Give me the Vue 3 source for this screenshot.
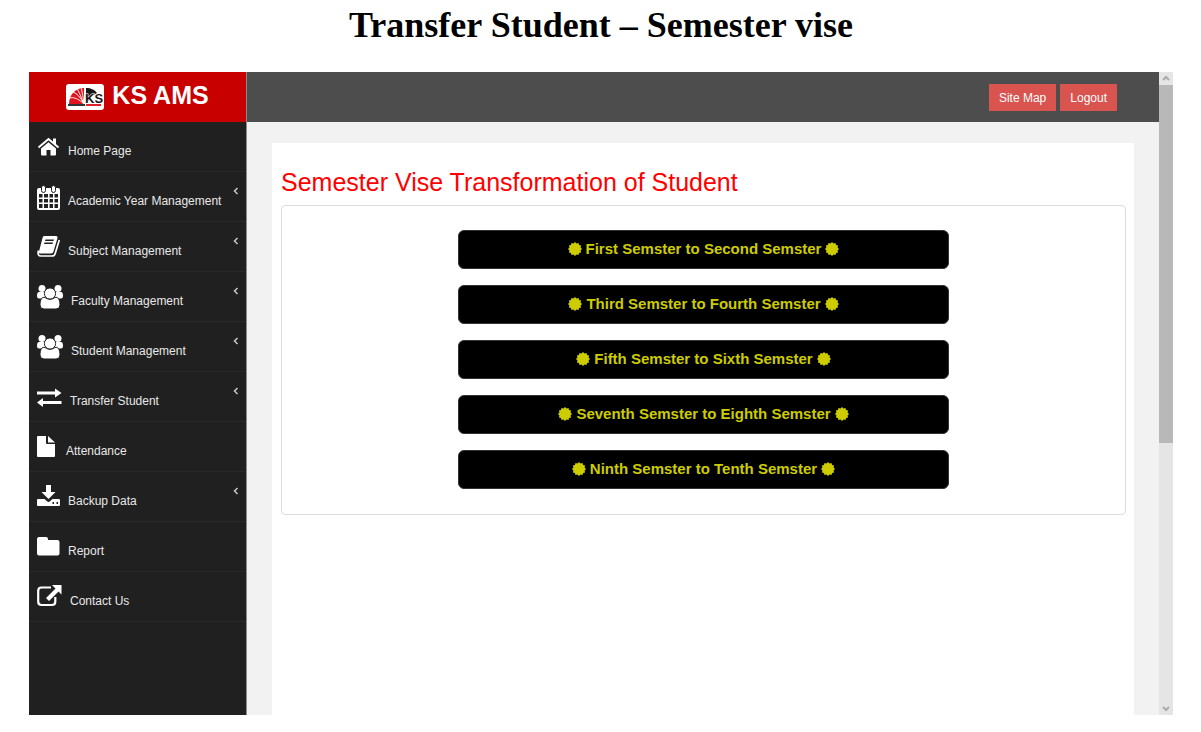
<script setup>
const menu = [
  { label: 'Home Page', icon: 'home', width: 24 },
  { label: 'Academic Year Management', icon: 'calendar', width: 24, sub: true },
  { label: 'Subject Management', icon: 'book', width: 24, sub: true },
  { label: 'Faculty Management', icon: 'users', width: 27, sub: true },
  { label: 'Student Management', icon: 'users', width: 27, sub: true },
  { label: 'Transfer Student', icon: 'exchange', width: 26, sub: true },
  { label: 'Attendance', icon: 'file', width: 22 },
  { label: 'Backup Data', icon: 'download', width: 24, sub: true },
  { label: 'Report', icon: 'folder', width: 24 },
  { label: 'Contact Us', icon: 'external', width: 26 }
]

const transfers = [
  'First Semster to Second Semster',
  'Third Semster to Fourth Semster',
  'Fifth Semster to Sixth Semster',
  'Seventh Semster to Eighth Semster',
  'Ninth Semster to Tenth Semster'
]

const badge = Array.from({ length: 24 }, (_, i) => {
  const r = i % 2 ? 5.8 : 7
  const a = (i * Math.PI) / 12
  return `${(7 + r * Math.cos(a)).toFixed(2)},${(7 + r * Math.sin(a)).toFixed(2)}`
}).join(' ')
</script>

<template>
  <div class="page">
    <h1 class="title">Transfer Student – Semester vise</h1>
    <div class="frame">
      <aside class="sidebar">
        <a href="#" class="brand">
          <svg class="logo" viewBox="0 0 38 26" aria-hidden="true">
            <rect width="38" height="26" rx="3" fill="#fff" />
            <path d="M3 20C3 11 9 4 18 4V20Z" fill="#e0141e" />
            <path d="M18 20Q13 10 7 8M18 20Q10 12 3 14M18 20Q14 10 11 4M18 20Q17 11 15 3" fill="none" stroke="#fff" stroke-width="0.900" />
            <path d="M20 4C25 4 29 6 31 9L26 12L22 17L20 19Z" fill="#161616" />
            <text x="19" y="19" class="logo-text">KS</text>
            <path d="M2 20H19V22H2Z" fill="#333" />
            <path d="M20 20H35V22H20Z" fill="#e02028" />
          </svg>
          <span>KS AMS</span>
        </a>
        <nav class="menu">
          <a v-for="item in menu" :key="item.label" href="#" class="item">
            <svg class="icon" :style="{ width: item.width + 'px' }" :viewBox="`0 0 ${item.width} 26`" aria-hidden="true">
              <template v-if="item.icon === 'home'">
                <path d="M4 14.500L11.500 8.300L19 14.500V20.500Q19 21.500 18 21.500H13.500V16H9.500V21.500H5Q4 21.500 4 20.500Z" />
                <path d="M1.500 13.500L11.500 5L21.500 13.500" class="line" stroke-width="2" />
                <path d="M16 4.500H19V11L16 8.500Z" />
              </template>
              <template v-else-if="item.icon === 'calendar'">
                <path fill-rule="evenodd" d="M2 4H21Q23 4 23 6V24Q23 26 21 26H2Q0 26 0 24V6Q0 4 2 4ZM2 10V13.500H5.500V10ZM7 10V13.500H11V10ZM12.500 10V13.500H16V10ZM17.500 10V13.500H21V10ZM2 15V18.500H5.500V15ZM7 15V18.500H11V15ZM12.500 15V18.500H16V15ZM17.500 15V18.500H21V15ZM2 20V24H5.500V20ZM7 20V24H11V20ZM12.500 20V24H16V20ZM17.500 20V24H21V20Z" />
                <rect x="4.500" y="1.500" width="4" height="7" rx="2" class="outline" />
                <rect x="14.500" y="1.500" width="4" height="7" rx="2" class="outline" />
              </template>
              <template v-else-if="item.icon === 'book'">
                <path fill-rule="evenodd" d="M7 2H19Q21 2 20.500 4L16.500 17.500Q16 19.500 14 19.500H3Q1.500 19.500 2 17.500L5.500 4Q6 2 7 2ZM8.500 5.500L8 7H16.500L17 5.500ZM7.500 8.500L7 10H15.500L16 8.500Z" />
                <path d="M1.500 16.500Q0 22 4 22H15Q17.500 22 18.200 19.500L22.300 6" class="line" stroke-width="1.700" />
              </template>
              <template v-else-if="item.icon === 'users'">
                <circle cx="5" cy="4.500" r="3.500" />
                <circle cx="21" cy="4.500" r="3.500" />
                <path d="M0 12Q0 8 2 8H8L10 14.500H2Q0 14.500 0 12ZM26 12Q26 8 24 8H18L16 14.500H24Q26 14.500 26 12Z" />
                <path d="M3 21C3 15.500 5 12.500 8 13.500Q13 17 18 13.500C21 12.500 23 15.500 23 21Q23 25 19 25H7Q3 25 3 21Z" class="cut" />
                <circle cx="13" cy="9.500" r="5.600" class="cut" />
              </template>
              <path v-else-if="item.icon === 'exchange'" d="M0 7.500H18V4.500L24.500 9L18 13.500V10.500H0ZM24.500 17H6V14L0 18.500L6 23V20H24.500Z" />
              <path v-else-if="item.icon === 'file'" d="M0 3Q0 2 1 2H9V9Q9 10 10 10H18V22Q18 23 17 23H1Q0 23 0 22ZM11 2L18 8.500H11Z" />
              <path v-else-if="item.icon === 'download'" fill-rule="evenodd" d="M9 1H14V8H18.500L11.500 15L4.500 8H9ZM1 15H7.500L10 17.300Q11.500 18.500 13 17.300L15.500 15H22Q23 15 23 16V21Q23 22 22 22H1Q0 22 0 21V16Q0 15 1 15ZM15.500 18V20H17V18ZM19.500 18V20H21V18Z" />
              <path v-else-if="item.icon === 'folder'" d="M0 5Q0 3 2 3H9Q11 3 11 5V6H20.500Q22.500 6 22.500 8V19.500Q22.500 21.500 20.500 21.500H2Q0 21.500 0 19.500Z" />
              <template v-else>
                <path d="M14 3.500H4.500Q1.200 3.500 1.200 7V17.500Q1.200 21 4.500 21H15Q18.300 21 18.300 17.500V13" class="line" stroke-width="2.200" />
                <path d="M15 1H24.500V10.500L21.500 7.500L12 17L9 14L18.500 4.500Z" />
              </template>
            </svg>
            <span class="label">{{ item.label }}</span>
            <svg v-if="item.sub" class="arrow" viewBox="0 0 6 8" aria-hidden="true">
              <path d="M4.500 1L1.500 4L4.500 7" />
            </svg>
          </a>
        </nav>
      </aside>
      <div class="main">
        <header class="topbar">
          <button type="button">Site Map</button>
          <button type="button">Logout</button>
        </header>
        <main class="content">
          <h2>Semester Vise Transformation of Student</h2>
          <section class="panel">
            <button v-for="name in transfers" :key="name" type="button" class="transfer">
              <svg viewBox="0 0 14 14" aria-hidden="true"><polygon :points="badge" /></svg>
              <span>{{ name }}</span>
              <svg viewBox="0 0 14 14" aria-hidden="true"><polygon :points="badge" /></svg>
            </button>
          </section>
        </main>
      </div>
      <div class="scroll" aria-hidden="true">
        <svg viewBox="0 0 14 13"><path d="M4 8L7 5L10 8" /></svg>
        <div class="track"><div class="thumb"></div></div>
        <svg viewBox="0 0 14 13"><path d="M4 5L7 8L10 5" /></svg>
      </div>
    </div>
  </div>
</template>

<style>
body {
  margin: 0;
  background: #fff;
}
</style>

<style scoped>
.page {
  box-sizing: border-box;
  display: flex;
  flex-direction: column;
  min-height: 100vh;
  padding: 5px 28px 17px 29px;
  font-family: "Liberation Sans", Arial, sans-serif;
  font-size: 12px;
}
.title {
  margin: 0 0 27px;
  font: bold 36px/40px "Liberation Serif", "Times New Roman", serif;
  text-align: center;
  color: #000;
}
.frame {
  flex: 1;
  display: flex;
}
.sidebar {
  flex: none;
  width: 217px;
  background: #202020;
  border-right: 1px solid #8c8c8c;
}
.brand {
  box-sizing: border-box;
  display: flex;
  justify-content: center;
  gap: 8px;
  height: 50px;
  padding-top: 8px;
  background: #c90000;
  color: #fff;
  font-size: 25px;
  font-weight: bold;
  line-height: 30px;
  text-decoration: none;
}
.logo {
  width: 38px;
  height: 26px;
  margin-top: 4px;
}
.logo-text {
  font: bold 13px "Liberation Sans", Arial, sans-serif;
  fill: #161616;
  stroke: #fff;
  stroke-width: 1;
  paint-order: stroke;
}
.item {
  box-sizing: border-box;
  display: flex;
  align-items: flex-start;
  height: 50px;
  padding: 12px 7px 0 8px;
  border-bottom: 1px solid #292929;
  color: #e8e8e8;
  text-decoration: none;
}
.icon {
  flex: none;
  height: 26px;
  margin-right: 7px;
  fill: #fff;
}
.line {
  fill: none;
  stroke: #fff;
}
.outline {
  stroke: #202020;
}
.cut {
  stroke: #202020;
  stroke-width: 1;
}
.label {
  flex: 1;
  padding-top: 10px;
  line-height: 14px;
  white-space: nowrap;
}
.arrow {
  flex: none;
  width: 6px;
  height: 8px;
  margin-top: 3px;
  fill: none;
  stroke: #c8c8c8;
  stroke-width: 1.5;
}
.main {
  flex: 1;
  display: flex;
  flex-direction: column;
  min-width: 0;
  background: #f2f2f2;
}
.topbar {
  box-sizing: border-box;
  display: flex;
  justify-content: flex-end;
  gap: 4px;
  height: 50px;
  padding: 12px 42px 0 0;
  background: #4d4d4d;
}
.topbar button {
  height: 27px;
  padding: 0 9px;
  border: 1px solid #d9534f;
  background: #d9534f;
  color: #fff;
  font: inherit;
}
.content {
  flex: 1;
  margin: 21px 25px 0;
  padding: 24px 8px 0 9px;
  background: #fff;
}
h2 {
  margin: 0 0 8px;
  font-size: 25px;
  font-weight: normal;
  line-height: 30px;
  color: #f00;
}
.panel {
  display: flex;
  flex-direction: column;
  align-items: center;
  gap: 16px;
  padding: 24px 25px 25px;
  border: 1px solid #ddd;
  border-radius: 4px;
}
.transfer {
  display: flex;
  align-items: center;
  justify-content: center;
  gap: 4px;
  width: 62%;
  height: 39px;
  padding: 0 0 2px;
  border: 1px solid #333;
  border-radius: 6px;
  background: #000;
  color: #cc0;
  font: bold 15px/20px "Liberation Sans", Arial, sans-serif;
}
.transfer svg {
  width: 14px;
  height: 14px;
  fill: #cc0;
}
.scroll {
  flex: none;
  display: flex;
  flex-direction: column;
  width: 14px;
  background: #e5e5e5;
}
.scroll svg {
  width: 14px;
  height: 13px;
  fill: none;
  stroke: #aaa;
  stroke-width: 2;
}
.track {
  flex: 1;
}
.thumb {
  height: 58%;
  background: #b8b8b8;
}
</style>
